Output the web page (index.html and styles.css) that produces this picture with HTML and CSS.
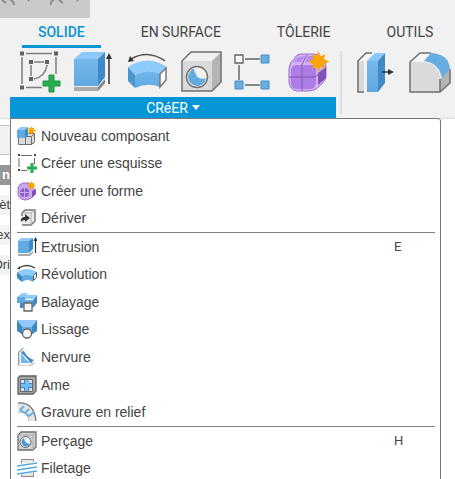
FILE: index.html
```html
<!DOCTYPE html>
<html lang="fr">
<head>
<meta charset="utf-8">
<meta name="viewport" content="width=device-width, initial-scale=1">
<title>Solide</title>
<link rel="stylesheet" href="styles.css">
</head>
<body>
<svg class="defs" aria-hidden="true">
  <defs>
    <linearGradient id="blue" x1="0" y1="0" x2="0" y2="1"><stop offset="0" stop-color="#73b7ee"/><stop offset="1" stop-color="#5fa9e0"/></linearGradient>
    <symbol id="star" viewBox="-10 -10 20 20"><path fill="#f9a602" d="M0-10 2-5 6.500-7 5-2.500 10 0 5 2.500 6.500 7 2 5 0 10-2 5-6.500 7-5 2.500-10 0-5-2.500-6.500-7-2-5Z"/></symbol>
  </defs>
</svg>

<header class="ribbon">
  <div class="quickbar">
    <svg width="90" height="18" viewBox="0 0 90 18" fill="none" stroke="#8d8d8d" stroke-width="2" aria-hidden="true"><path d="M2 0 6 3M10 0Q14 1 14 5M29 0 28 1M54 0Q50 1 51 5M59 0 63 3M77 0 78 1"/></svg>
  </div>
  <nav class="tabs">
    <button class="tab tab-active">SOLIDE</button>
    <button class="tab">EN SURFACE</button>
    <button class="tab">TÔLERIE</button>
    <button class="tab">OUTILS</button>
  </nav>

  <div class="tools">
    <section class="panel">
      <div class="icons">
        <button class="tool" aria-label="Créer une esquisse"><svg viewBox="0 0 44 44"><g fill="none" stroke="#7c7c7c" stroke-width="1.500"><path d="M7 3.500H33M3 7V34M37 7V24M7 37.500H23M15 12H25M12 15V26M28 15Q26 27 15 29"/></g><path fill="#606060" d="M1 1.500h4v4h-4zM35 1.500h4v4h-4zM1 35.500h4v4h-4zM10 10h4v4h-4zM26 10h4v4h-4zM10 27h4v4h-4z"/><path fill="#28ad50" stroke="#219245" d="M30 25h5v6h6v5h-6v6h-5v-6h-6v-5h6z"/></svg></button>
        <button class="tool" aria-label="Extrusion"><svg viewBox="0 0 44 44"><path fill="#ababab" d="M2 37h24v4H2z"/><path fill="#838383" d="m26 37 7-8v4l-7 8z"/><path fill="url(#blue)" d="M2 9h24v27H2z"/><path fill="#8cc9fb" d="M2 9 10 2h23l-7 7z"/><path fill="#4189c4" d="m26 9 7-7v25l-7 9z"/><path stroke="#333" stroke-width="1.500" d="M37 7v27"/><path fill="#333" d="m34 9 3-6 3 6z"/></svg></button>
        <button class="tool" aria-label="Révolution"><svg viewBox="0 0 44 44"><path fill="none" stroke="#555" stroke-width="1.500" d="M5 9Q22-1 39 11"/><path fill="#333" d="m2 12 2-6 4 5z"/><path fill="#8ccbfa" d="M2 17Q22 4 41 17l-7 7Q22 18 9 25z"/><path fill="url(#blue)" d="M9 25Q22 18 34 24V37Q22 32 9 38z"/><path fill="#4b96cf" d="m2 17 7 8v13l-7-7z"/><path fill="#fff" stroke="#777" stroke-width="1.500" d="m34 24 6-6v12l-6 7z"/></svg></button>
        <button class="tool" aria-label="Perçage"><svg viewBox="0 0 44 44"><path fill="#f1f1f1" d="m2 11 9-9h30l-9 9z"/><path fill="#b5b5b5" d="m32 11 9-9v30l-9 9z"/><path fill="#dadada" d="M2 11h30v30H2z"/><path fill="none" stroke="#707070" stroke-width="1.500" d="m2 11 9-9h30v30l-9 9H2z"/><circle cx="17" cy="27" r="10.500" fill="#f0f0f0" stroke="#747474" stroke-width="1.500"/><path fill="#65abe0" d="M14 18.500a9 9 0 1 0 12 10q-9 1-10-4-2-3-2-6z"/></svg></button>
        <button class="tool" aria-label="Réseau"><svg viewBox="0 0 44 44"><path fill="none" stroke="#666" stroke-width="1.500" d="M12 9H27M6 15V30M12 35H27"/><path fill="#f8f8f8" stroke="#626262" stroke-width="1.300" d="M2 5h8v8H2z"/><path fill="#6aaee4" stroke="#4c8dbf" d="M28 5h8v8h-8zM2 31h8v8H2zM28 31h8v8h-8z"/></svg></button>
        <button class="tool" aria-label="Créer une forme"><svg viewBox="0 0 44 44"><path fill="#d3b4f5" stroke="#9870c4" d="M13 4H27Q38 5 39 16V27Q38 32 29 39 26 41 20 41H10Q3 40 2 32V18Q3 12 7 9 10 4 13 4z"/><path fill="#8250b9" d="m31 23 8-6v11l-8 7z"/><path fill="#ad7ce6" d="M9 15h17q3 1 3 5v13q-1 6-6 6H9q-5-1-5-6V20q0-4 5-5z"/><path fill="#b88af0" d="m11 7 7-1-4 6H6zM21 6h9l-5 6h-7z"/><path fill="none" stroke="#8259ae" d="M15 41V14l5-9M2 27h26l10-8"/><use href="#star" x="21" y="1" width="21" height="21"/></svg></button>
      </div>
      <button class="panel-title" aria-expanded="true">CRéER <span class="caret"></span></button>

      <div class="menu" role="menu">
        <div class="menu-group four">
          <button class="item" role="menuitem"><svg viewBox="0 0 20 20"><path fill="#a0a0a0" d="m16 11 2-3v8l-2 3z"/><path fill="#dcdcdc" stroke="#707070" d="M1.500 10.500h7v8h-7zM8.500 10.500l3-3h6v8l-3 3h-6zM8.500 10.500h6v8M14.500 10.500l3-3"/><path fill="#61aae2" d="M0 4h8v8H0z"/><path fill="#91cafa" d="m0 4 3-3h8L8 4z"/><path fill="#4189c4" d="m8 4 3-3v8l-3 3z"/><use href="#star" x="10" y="0" width="9" height="9"/></svg><span>Nouveau composant</span></button>
          <button class="item" role="menuitem"><svg viewBox="0 0 20 20"><path fill="none" stroke="#666" d="M4 2.500h11M2 5v9M17.500 5v6M4 17.500h6"/><path fill="#444" d="M1 1h2v2H1zM17 1h2v2h-2zM1 16h2v2H1z"/><path stroke="#28ad50" stroke-width="3" d="M15 10v10M10 15h10"/></svg><span>Créer une esquisse</span></button>
          <button class="item" role="menuitem"><svg viewBox="0 0 20 20"><path fill="#cba6f2" stroke="#9870c3" d="M6 2h6l6 7v3q-1 3-4 5-2 2-6 2-7-1-7-7V7q1-4 5-5z"/><path fill="#8250b9" d="m15 10 4-2v5l-4 4z"/><path fill="#8d60c4" d="M7 7v4H3q0-3 4-4zM8 7q4 0 4 4H8zM3 12h4v4q-4 0-4-4zM8 12h4q0 4-4 4z"/><use href="#star" x="10" y="0" width="9" height="9"/></svg><span>Créer une forme</span></button>
          <button class="item" role="menuitem"><svg viewBox="0 0 20 20"><path fill="#ececec" stroke="#777" stroke-width="1.500" d="M5 8V5l3-3h10v11l-4 4H5"/><path fill="none" stroke="#aaa" d="M5 5h9v12M14 5l4-3"/><path fill="#333" d="m8 6 5 4-5 4v-2q-3 0-4 2-1-5 4-5z"/></svg><span>Dériver</span></button>
        </div>
        <hr class="rule">
        <div class="menu-group seven">
          <button class="item" role="menuitem"><svg viewBox="0 0 20 20"><path fill="#aaa" d="M1 17h11l4-3v2l-3 3H1z"/><path fill="#61aae2" d="M1 4h11v12H1z"/><path fill="#91cafa" d="m1 4 3-3h12l-4 3z"/><path fill="#4189c4" d="m12 4 4-3v11l-4 4z"/><path stroke="#333" stroke-width="1.200" d="M18.500 3v13"/><path fill="#333" d="m16.500 4 2-4 2 4z"/></svg><span>Extrusion</span><kbd>E</kbd></button>
          <button class="item" role="menuitem"><svg viewBox="0 0 20 20"><path fill="none" stroke="#444" stroke-width="1.300" d="M2 4Q10-1 18 4"/><path fill="#333" d="m0 5 3-3v3z"/><path fill="#8ccbfa" d="M0 8Q10 2 20 8l-4 4Q10 9 5 12z"/><path fill="#61aae2" d="M5 12Q10 9 16 12v6Q10 14 5 18z"/><path fill="#4189c4" d="m0 8 5 4v6l-5-4z"/><path fill="#fff" stroke="#555" d="m16.500 11.500 3-3v5l-3 3z"/></svg><span>Révolution</span></button>
          <button class="item" role="menuitem"><svg viewBox="0 0 20 20"><path fill="#8ccbfa" d="m0 5 5-4h6l-2 2h11l-4 4H7v1H0z"/><path fill="#61aae2" d="M0 5h8v3h8v7H3v-4H0z"/><path fill="#4189c4" d="m16 8 4-5v8l-4 5zM3 11h3v5H3z"/><path fill="#f6f6f6" stroke="#666" stroke-width="1.300" d="M7 11h8v8H7z"/></svg><span>Balayage</span></button>
          <button class="item" role="menuitem"><svg viewBox="0 0 20 20"><path fill="#91cafa" d="M0 1h20l-5 8H5z"/><path fill="#3f88c4" d="m0 1 6 8v7l-6-4zM20 1l-6 8v7l6-4z"/><path fill="#62aae1" d="M5 8h10v7H5z"/><circle cx="10" cy="14.500" r="4.500" fill="#f5f5f5" stroke="#666" stroke-width="1.300"/></svg><span>Lissage</span></button>
          <button class="item" role="menuitem"><svg viewBox="0 0 20 20"><path fill="#d6d6d6" d="M1 5 6 0v13l13 3-4 3H1z"/><path fill="#f6f6f6" d="M3 6 5 4v12h9l-2 2H3z"/><path fill="none" stroke="#999" d="M1.500 18V5l5-4"/><path fill="#3f88c4" d="m4 5 3-1q3 7 10 9l-3 3z"/><path fill="#70b8f1" d="M4 5q4 8 10 11H4z"/></svg><span>Nervure</span></button>
          <button class="item" role="menuitem"><svg viewBox="0 0 20 20"><path fill="#a7a7a7" stroke="#606060" stroke-width="1.300" d="m1 3 2-2h16v15l-3 3H1z"/><path fill="#dedede" stroke="#666" d="M3.500 4.500h12v12h-12z"/><path fill="#3f88c4" d="M7 5h5v3h3v5h-3v3H7v-3H4V8h3z"/><path fill="#75bbf4" d="M8 5h4v4h3v3h-4v4H8v-4H4V9h4z"/></svg><span>Ame</span></button>
          <button class="item" role="menuitem"><svg viewBox="0 0 20 20"><path fill="#e4e4e4" d="M1 1q16-1 18 18h-7q-1-9-11-9z"/><path fill="none" stroke="#777" stroke-width="1.300" d="M1 1q16-1 18 18"/><path fill="none" stroke="#63aee8" stroke-width="2" d="m3 8 9 6 5-4M3 8l4-4M8 11l4-4"/><path fill="none" stroke="#bbb" d="M1 10q10 0 11 9"/></svg><span>Gravure en relief</span></button>
        </div>
        <hr class="rule">
        <div class="menu-group two">
          <button class="item" role="menuitem"><svg viewBox="0 0 20 20"><path fill="#d2d2d2" stroke="#6d6d6d" stroke-width="1.300" d="m1 4 3-3h15v15l-3 3H1z"/><path fill="none" stroke="#aaa" d="M1 4h15v15M16 4l3-3"/><circle cx="8.500" cy="11" r="5.500" fill="#f4f4f4" stroke="#666"/><path fill="#4c9bd8" d="M7 7a4.500 4.500 0 1 0 6 6Q7 12 7 7z"/></svg><span>Perçage</span><kbd>H</kbd></button>
          <button class="item" role="menuitem"><svg viewBox="0 0 20 20"><path fill="#e8e8e8" stroke="#888" d="M4.500 1.500h12v17h-12z"/><path fill="#fff" d="M1 6 20 3v11L1 17z"/><path fill="none" stroke="#55a9e6" stroke-width="1.700" d="M0 8 20 5M0 12 20 9M0 16 20 13"/></svg><span>Filetage</span></button>
        </div>
      </div>
    </section>

    <section class="modify">
      <button class="tool" aria-label="Appuyer / tirer"><svg viewBox="0 0 44 44"><path fill="#f6f6f6" d="m2 10 8-8h7l-9 8z"/><path fill="#d9d9d9" d="M2 10h6v31H2z"/><path fill="none" stroke="#6c6c6c" stroke-width="1.500" d="M8 41H2V10l8-8h6"/><path fill="#8ac8fb" d="m11 10 8-8h10l-7 8z"/><path fill="#4189c4" d="m22 10 7-8v30l-7 9z"/><path fill="url(#blue)" d="M11 10h11v31H11z"/><path stroke="#333" stroke-width="1.500" d="M26 21h8"/><path fill="#333" d="m32 18 6 3-6 3z"/></svg></button>
      <button class="tool" aria-label="Congé"><svg viewBox="0 0 44 44"><path fill="#f5f5f5" d="m1 11 10-9h11l-8 9z"/><path fill="#b5b5b5" d="m31 28 10-10v14l-10 9z"/><path fill="#dadada" d="M1 11h12q17 1 18 17v13H1z"/><path fill="none" stroke="#707070" stroke-width="1.500" d="M22 2H11L1 11v30h30l10-9V18M31 28v13"/><path fill="#67ade2" d="M22 2q18 1 19 16l-8 9Q30 12 15 10z"/></svg></button>
    </section>
  </div>
</header>

<aside class="browser">
  <div class="browser-head"></div>
  <ul class="tree">
    <li class="node node-selected">n</li>
    <li class="node">èt</li>
    <li class="node">ex</li>
    <li class="node">Ori</li>
  </ul>
</aside>
</body>
</html>
```
FILE: styles.css
```css
* {
  box-sizing: border-box;
}

body {
  margin: 0;
  height: 100vh;
  overflow: hidden;
  background: #fff;
  color: #444;
  font-family: "Liberation Sans", Arial, sans-serif;
  font-size: 14px;
}

button {
  margin: 0;
  padding: 0;
  border: 0;
  background: none;
  color: inherit;
  font: inherit;
}

.defs {
  position: absolute;
  width: 0;
  height: 0;
}

.ribbon {
  background: #f1f1f1;
  border-bottom: 1px solid #dcdcdc;
}

.quickbar {
  width: 90px;
  height: 18px;
  background: #cacaca;
}

.tabs {
  display: flex;
  gap: 24px;
  padding-left: 22px;
  font-family: Roboto, sans-serif;
}

.tab {
  height: 30px;
  padding: 1px 16px 0;
  border-bottom: 3px solid transparent;
  white-space: nowrap;
}

.tab-active {
  border-color: #0696d7;
  color: #0c91d2;
  font-weight: 500;
}

.tools {
  display: flex;
}

.panel {
  position: relative;
  width: 326px;
  margin-left: 10px;
}

.icons {
  display: grid;
  grid-template-columns: repeat(6, 1fr);
  padding: 2px 0 3px 4px;
}

.tool {
  display: flex;
  justify-content: center;
}

.tool svg {
  width: 44px;
  height: 44px;
}

.panel-title {
  display: flex;
  align-items: center;
  justify-content: center;
  gap: 4px;
  width: 100%;
  height: 21px;
  background: #0696d7;
  color: #fff;
  font-family: Roboto, sans-serif;
}

.caret {
  border: 4px solid transparent;
  border-top: 5px solid #fff;
  border-bottom: 0;
}

.modify {
  display: flex;
  gap: 9px;
  margin: 3px 0 4px 4px;
  padding-left: 14px;
  border-left: 2px solid #dedede;
}

.modify .tool {
  height: 44px;
}

.menu {
  position: absolute;
  top: 100%;
  left: 0;
  z-index: 1;
  width: 431px;
  padding: 3px 5px 5px 6px;
  border: 1px solid #777;
  border-radius: 0 3px 3px 0;
  background: #fff;
}

.menu-group {
  display: grid;
  grid-auto-rows: 1fr;
}

.four {
  height: 110px;
}

.seven {
  height: 193px;
}

.two {
  height: 55px;
}

.rule {
  height: 1px;
  margin: 0;
  border: 0;
  background: #808080;
}

.item {
  display: grid;
  grid-template-columns: 20px 1fr 41px;
  align-items: center;
  column-gap: 4px;
  width: 100%;
  text-align: left;
}

.item svg {
  width: 20px;
  height: 20px;
}

.item kbd {
  font-family: Roboto, sans-serif;
  font-size: 13px;
}

.browser {
  width: 10px;
  padding-top: 6px;
  overflow: hidden;
}

.browser-head {
  height: 30px;
  border: solid #c4c4c4;
  border-width: 1px 0;
  background: #f1f1f1;
}

.tree {
  display: grid;
  grid-template-columns: 10px;
  gap: 10px;
  margin: 10px 0 0;
  padding: 0;
  font-size: 13px;
  list-style: none;
}

.node {
  display: flex;
  justify-content: flex-end;
  height: 20px;
  background: #f3f3f3;
  line-height: 20px;
}

.node-selected {
  background: #969696;
  color: #fff;
  font-weight: 700;
}
```
